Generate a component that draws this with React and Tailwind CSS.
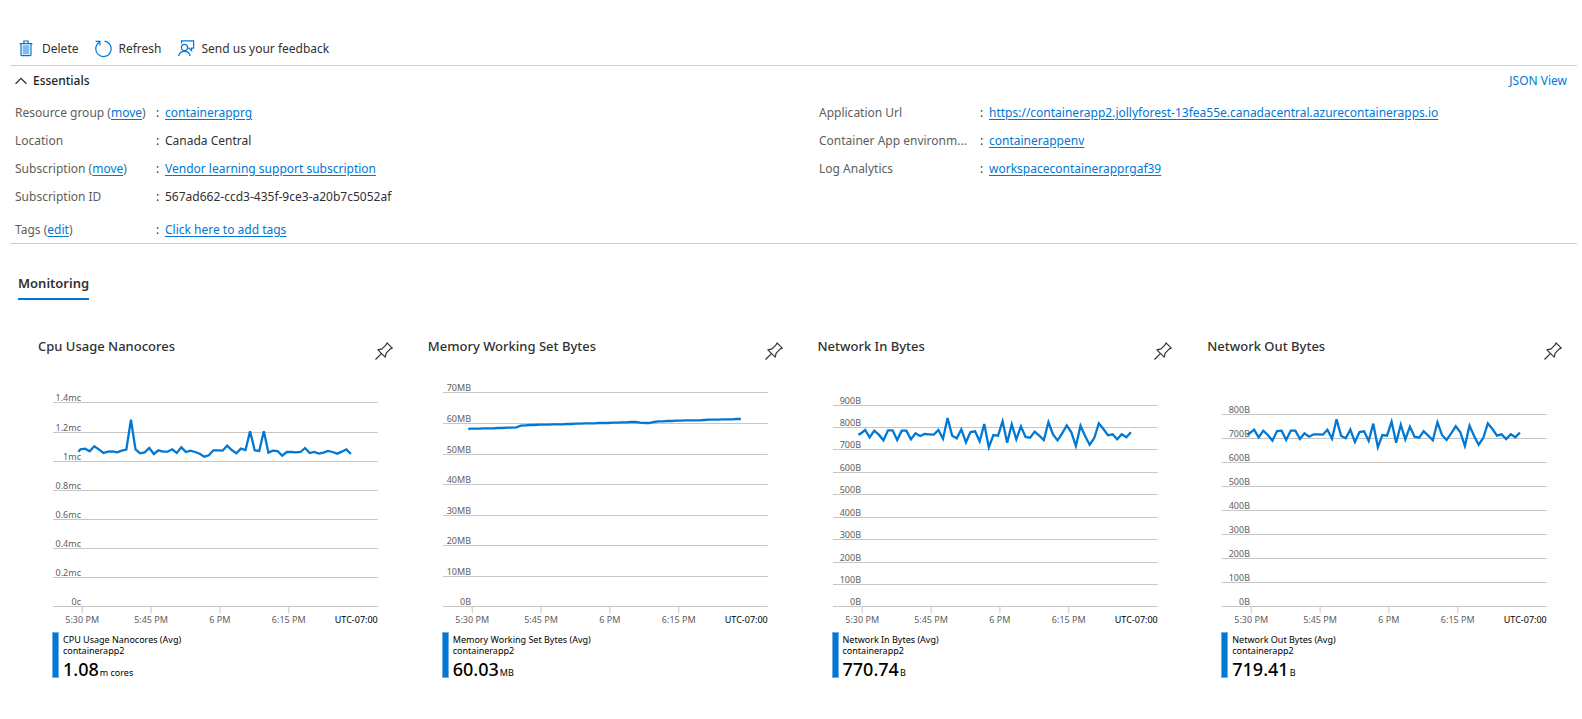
const POINT_STEP = 13.76;

// Axis labels run from the top grid line down; `lines` are grid positions in the plot.
// `trace` holds one sample per minute, in thirds of a pixel.
const charts = [
  {
    title: 'Cpu Usage Nanocores',
    legend: 'CPU Usage Nanocores (Avg)',
    value: '1.08',
    unit: 'm cores',
    labels: ['1.4mc', '1.2mc', '1mc', '0.8mc', '0.6mc', '0.4mc', '0.2mc', '0c'],
    lines: [26, 56, 85, 114, 143, 172, 201, 230],
    start: 227,
    trace: [
      220, 218, 226, 211, 220, 231, 227, 226, 229, 224, 221, 131, 220, 232, 229, 216, 234, 223, 227, 227,
      220, 231, 214, 228, 224, 228, 233, 242, 238, 223, 223, 224, 209, 222, 232, 218, 222, 166, 223, 225,
      166, 230, 224, 225, 239, 228, 228, 229, 228, 216, 231, 228, 233, 230, 225, 228, 233, 227, 220, 234,
    ],
  },
  {
    title: 'Memory Working Set Bytes',
    legend: 'Memory Working Set Bytes (Avg)',
    value: '60.03',
    unit: 'MB',
    labels: ['70MB', '60MB', '50MB', '40MB', '30MB', '20MB', '10MB', '0B'],
    lines: [16, 47, 78, 108, 139, 169, 200, 230],
    start: 159,
    trace: [
      158, 158, 158, 157, 157, 157, 156, 156, 155, 155, 154, 149, 148, 147, 147, 146, 146, 146, 145, 145,
      145, 144, 144, 143, 143, 142, 142, 142, 141, 141, 141, 140, 140, 139, 139, 138, 138, 140, 141, 141,
      138, 136, 136, 135, 135, 134, 134, 133, 133, 133, 133, 132, 131, 131, 131, 130, 130, 130, 129, 129,
    ],
  },
  {
    title: 'Network In Bytes',
    legend: 'Network In Bytes (Avg)',
    value: '770.74',
    unit: 'B',
    labels: ['900B', '800B', '700B', '600B', '500B', '400B', '300B', '200B', '100B', '0B'],
    lines: [29, 51, 73, 96, 118, 141, 163, 186, 208, 230],
    start: 176,
    trace: [
      173, 162, 184, 164, 176, 193, 163, 163, 192, 164, 164, 190, 172, 180, 174, 175, 176, 162, 188, 126,
      179, 187, 160, 199, 168, 166, 196, 144, 214, 177, 179, 136, 200, 145, 190, 151, 183, 185, 167, 179,
      192, 138, 175, 193, 172, 148, 169, 210, 149, 180, 206, 186, 142, 159, 178, 175, 190, 175, 184, 169,
    ],
  },
  {
    title: 'Network Out Bytes',
    legend: 'Network Out Bytes (Avg)',
    value: '719.41',
    unit: 'B',
    labels: ['800B', '700B', '600B', '500B', '400B', '300B', '200B', '100B', '0B'],
    lines: [38, 62, 86, 110, 134, 158, 182, 206, 230],
    start: 176,
    trace: [
      172, 161, 184, 164, 177, 194, 165, 164, 192, 164, 164, 189, 172, 182, 175, 175, 176, 161, 188, 130,
      180, 187, 161, 198, 168, 166, 195, 143, 214, 177, 179, 137, 200, 146, 190, 152, 182, 185, 166, 179,
      193, 139, 177, 192, 172, 151, 169, 210, 149, 180, 206, 186, 142, 159, 179, 175, 189, 175, 184, 170,
    ],
  },
];

const ticks = [
  ['9%', '5:30 PM'],
  ['30.2%', '5:45 PM'],
  ['51.4%', '6 PM'],
  ['72.6%', '6:15 PM'],
];

function TrashIcon() {
  return (
    <svg className="size-[18px]" viewBox="0 0 18 18" fill="none" aria-hidden="true">
      <rect x="4.6" y="5.2" width="6.8" height="9.2" fill="#83b9ec" />
      <path d="M1.6 3.6h12.8M5.9 3.3V1h4.2v2.3M3 3.6v11.1a1 1 0 0 0 1 1h8a1 1 0 0 0 1-1V3.6" stroke="#0078d4" strokeWidth="1.2" />
    </svg>
  );
}

function RefreshIcon() {
  return (
    <svg className="size-[18px]" viewBox="0 0 18 18" fill="none" stroke="#0078d4" strokeWidth="1.2" aria-hidden="true">
      <path d="M9.6 1.2A7.7 7.7 0 1 1 4.7 2.1" />
      <path d="M.6 1.3h4.3v4.2" />
    </svg>
  );
}

function FeedbackIcon() {
  return (
    <svg className="size-[18px]" viewBox="0 0 18 18" fill="none" stroke="#0078d4" strokeWidth="1.2" aria-hidden="true">
      <path d="M3.6 3.6V.8h12v7.4h-2v2.4l-2.5-2.4h-1" />
      <circle cx="6.4" cy="7.4" r="3.1" />
      <path d="M.6 16.2a5.9 5.9 0 0 1 11.6 0" />
    </svg>
  );
}

function PinIcon() {
  return (
    <svg className="size-[18px]" viewBox="0 0 18 18" fill="none" stroke="#323130" strokeWidth="1.2" aria-hidden="true">
      <path d="M12 .9L17.3 6.1L15.3 6.9L11.2 11.1L10.2 15.2L2.9 7.9L7.1 6.9L11.2 2.7Z" strokeLinejoin="round" />
      <path d="M.5 17.5L6.4 11.6" />
    </svg>
  );
}

function ToolbarButton({ icon, children }) {
  return (
    <button type="button" className="flex items-center gap-1.5 text-[#323130]">
      {icon}
      {children}
    </button>
  );
}

function Link({ children }) {
  return (
    <a href="#" className="text-[#0078d4] underline underline-offset-2">
      {children}
    </a>
  );
}

function Field({ label, action, wide, last, children }) {
  return (
    <div className={last ? 'flex h-7 items-center mt-[5px]' : 'flex h-7 items-center'}>
      <dt className={wide ? 'w-[161px] shrink-0 whitespace-nowrap text-[#605e5c]' : 'w-[141px] shrink-0 whitespace-nowrap text-[#605e5c]'}>
        {label}
        {action && (
          <>
            {' '}(<Link>{action}</Link>)
          </>
        )}
      </dt>
      <dd className="flex min-w-0 text-[#323130]">
        <span className="w-[9px] shrink-0">:</span>
        <span className="min-w-0 break-words">{children}</span>
      </dd>
    </div>
  );
}

function Chart({ chart }) {
  const points = [`76,${chart.start}`, ...chart.trace.map((y, i) => `${(82.6 + i * POINT_STEP).toFixed(1)},${y}`)];
  return (
    <svg className="block h-[251px] w-full overflow-visible text-[9px]" role="img" aria-label={chart.title}>
      {chart.lines.map((y, i) => (
        <g key={y}>
          <rect x="0" y={y} width="100%" height="1" fill="#c8c6c4" />
          <text x="28" y={y - 1} textAnchor="end" fill="#605e5c">
            {chart.labels[i]}
          </text>
        </g>
      ))}
      {ticks.map(([x, label]) => (
        <g key={label}>
          <line x1={x} x2={x} y1="231" y2="237" stroke="#c8c6c4" />
          <text x={x} y="247" textAnchor="middle" fill="#605e5c">
            {label}
          </text>
        </g>
      ))}
      <text x="100%" y="247" textAnchor="end" fill="#000">
        UTC-07:00
      </text>
      <svg x="0" y="0" width="100%" height="240" viewBox="0 0 975 720" preserveAspectRatio="none">
        <polyline points={points.join(' ')} fill="none" stroke="#0078d4" strokeWidth="2.3" vectorEffect="non-scaling-stroke" />
      </svg>
    </svg>
  );
}

function MetricCard({ chart }) {
  return (
    <section className="pl-5 pr-[15px]">
      <header className="flex h-[46px] items-start justify-between">
        <h3 className="text-[13px] leading-8 font-medium text-[#323130]">{chart.title}</h3>
        <button type="button" aria-label={`Pin ${chart.title}`} className="mt-3">
          <PinIcon />
        </button>
      </header>
      <div className="px-[15px]">
        <Chart chart={chart} />
        <div className="mt-[5px] flex h-[46px] gap-1 text-[9px] leading-[11px] text-black">
          <span className="-ml-px w-[7px] border border-[#71afe5] bg-[#0078d4]" />
          <div className="pt-0.5">
            <p>{chart.legend}</p>
            <p>containerapp2</p>
            <p className="flex items-baseline gap-px">
              <span className="text-[18px] leading-[26px] font-medium">{chart.value}</span>
              <span>{chart.unit}</span>
            </p>
          </div>
        </div>
      </div>
    </section>
  );
}

export default function App() {
  return (
    <main className="min-h-screen bg-white pt-8 pr-[5px] pb-8 pl-[10px] font-['Noto_Sans','Open_Sans',sans-serif] text-[12px] leading-4">
      <div role="toolbar" aria-label="Actions" className="flex h-[34px] items-center gap-4 border-b border-[#d2d0ce] pl-2">
        <ToolbarButton icon={<TrashIcon />}>Delete</ToolbarButton>
        <ToolbarButton icon={<RefreshIcon />}>Refresh</ToolbarButton>
        <ToolbarButton icon={<FeedbackIcon />}>Send us your feedback</ToolbarButton>
      </div>

      <section className="border-b border-[#d2d0ce] pl-[5px] pr-[10px]">
        <div className="flex h-[33px] items-center justify-between pb-[3px]">
          <button type="button" className="flex items-center gap-1.5 font-medium text-[#201f1e]">
            <svg className="h-3 w-3" viewBox="0 0 12 12" fill="none" stroke="#323130" strokeWidth="1.3" aria-hidden="true">
              <path d="M.6 8.8L6 3.4L11.4 8.8" />
            </svg>
            Essentials
          </button>
          <a href="#" className="text-[#0078d4]">JSON View</a>
        </div>
        <div className="-mb-px grid grid-cols-2 gap-x-14">
          <dl>
            <Field label="Resource group" action="move"><Link>containerapprg</Link></Field>
            <Field label="Location">Canada Central</Field>
            <Field label="Subscription" action="move"><Link>Vendor learning support subscription</Link></Field>
            <Field label="Subscription ID">567ad662-ccd3-435f-9ce3-a20b7c5052af</Field>
            <Field label="Tags" action="edit" last><Link>Click here to add tags</Link></Field>
          </dl>
          <dl>
            <Field wide label="Application Url">
              <Link>https://containerapp2.jollyforest-13fea55e.canadacentral.azurecontainerapps.io</Link>
            </Field>
            <Field wide label="Container App environm..."><Link>containerappenv</Link></Field>
            <Field wide label="Log Analytics"><Link>workspacecontainerapprgaf39</Link></Field>
          </dl>
        </div>
      </section>

      <div className="pl-2">
        <h2 className="mt-[30px] inline-block border-b-2 border-[#0078d4] pb-1.5 text-[13px] leading-[18px] font-semibold text-[#323130]">
          Monitoring
        </h2>
        <div className="mt-[30px] grid grid-cols-4">
          {charts.map((chart) => (
            <MetricCard key={chart.title} chart={chart} />
          ))}
        </div>
      </div>
    </main>
  );
}
